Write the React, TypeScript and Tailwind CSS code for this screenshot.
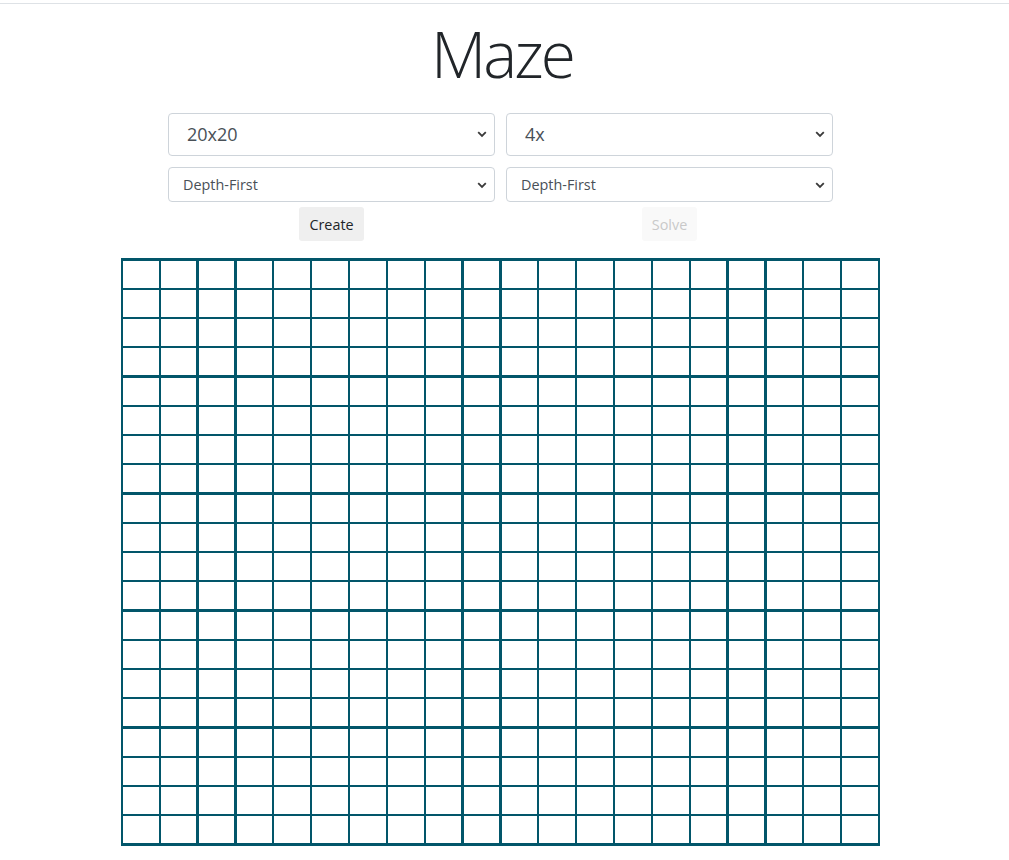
import React from "react";

const THICK_COLS = new Set([2, 3, 9, 10, 16, 17]);

function Chevron() {
  return (
    <svg width="10" height="7" viewBox="0 0 10 7" className="shrink-0">
      <path d="M1.2 1.2 L5 5 L8.8 1.2" fill="none" stroke="#3a3a3a" strokeWidth="1.8" />
    </svg>
  );
}

function FakeSelect({ value, large }: { value: string; large?: boolean }) {
  return (
    <div
      className={
        large
          ? "flex h-[43px] w-[327px] items-center justify-between rounded-[4px] border border-[#ced4da] bg-white pl-[18px] pr-[7px] text-[18px] text-[#495057]"
          : "flex h-[35px] w-[327px] items-center justify-between rounded-[4px] border border-[#ced4da] bg-white pl-[14px] pr-[7px] pt-px text-[14.4px] text-[#495057]"
      }
    >
      <span>{value}</span>
      <Chevron />
    </div>
  );
}

export default function App() {
  const cells = [];
  for (let r = 0; r < 20; r++) {
    for (let c = 0; c < 20; c++) {
      const top = r % 4 === 0 ? "border-t-[3px]" : "border-t-2";
      const left = THICK_COLS.has(c) ? "border-l-[3px]" : "border-l-2";
      cells.push(
        <div key={`${r}-${c}`} className={`${top} ${left} border-[#02566a] bg-white`} />
      );
    }
  }

  return (
    <div
      className="min-h-[860px] bg-white"
      style={{ fontFamily: '"Open Sans", "Noto Sans", "Liberation Sans", sans-serif' }}
    >
      <div className="h-[4px] border-b border-[#dee2e6]" />
      <div className="flex w-[1001px] flex-col items-center">
        <h1 className="mt-[18px] h-[65px] pl-[3px] text-[64px] font-light leading-none tracking-[-3px] text-[#212529]">Maze</h1>
        <div className="mt-[26px] grid grid-cols-[327px_327px] gap-x-[11px] gap-y-[11px]">
          <FakeSelect value="20x20" large />
          <FakeSelect value="4x" large />
          <FakeSelect value="Depth-First" />
          <FakeSelect value="Depth-First" />
        </div>
        <div className="mt-[5px] grid grid-cols-[327px_327px] gap-x-[11px]">
          <div className="flex justify-center">
            <button className="h-[34px] rounded-[3px] bg-[#efefef] px-[10px] pt-[2px] text-[14.4px] text-[#212529]">
              Create
            </button>
          </div>
          <div className="flex justify-center">
            <button disabled className="h-[34px] rounded-[3px] bg-[#f9f9f9] px-[10px] pt-[2px] text-[14.4px] text-[#c9c9c9]">
              Solve
            </button>
          </div>
        </div>
        <div className="mt-[17px] grid grid-cols-[38px_37px_38px_38px_38px_38px_38px_38px_37px_38px_38px_38px_38px_38px_38px_37px_38px_38px_38px_38px] grid-rows-[30px_29px_29px_29px_30px_29px_29px_29px_30px_29px_29px_29px_30px_29px_29px_29px_30px_29px_29px_29px] border-r-2 border-b-[3px] border-[#02566a]">
          {cells}
        </div>
      </div>
    </div>
  );
}
